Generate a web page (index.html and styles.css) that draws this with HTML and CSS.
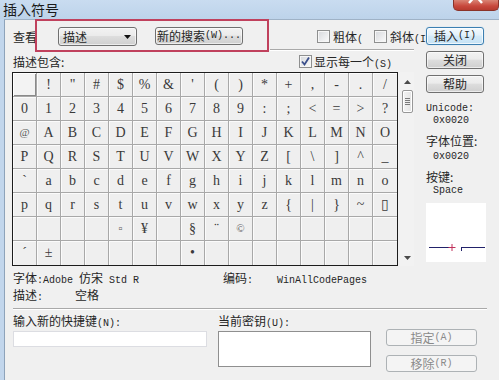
FILE: index.html
```html
<!DOCTYPE html>
<html>
<head>
<meta charset="utf-8">
<title>插入符号</title>
<link rel="stylesheet" href="styles.css">
</head>
<body>
<div class="titlebar">
  <span class="title">插入符号</span>
  <div class="close"><svg width="46" height="11" viewBox="0 0 46 11"><path d="M22 -3 L16 4 M23 -3 L29 4" stroke="#fff" stroke-width="2.4" fill="none"/></svg></div>
</div>
<div class="window">
  <div class="inner">
    <div class="upper">
      <div class="left">
        <div class="toprow">
          <span class="look">查看</span>
          <div class="select"><span>描述</span><svg class="arr" width="7" height="4" viewBox="0 0 7 4"><path d="M0 0H7L3.5 4Z" fill="#111"/></svg></div>
          <div class="btn search">新的搜索<span class="m">(W)...</span></div>
          <span class="cb cb1"></span><span class="cblbl1">粗体<span class="m">(</span></span>
          <span class="cb"></span><span class="cblbl2">斜体<span class="m">(I</span></span>
        </div>
        <div class="sep1"></div>
        <div class="labelrow">
          <span class="lr-label">描述包含:</span>
          <span class="cb"><svg width="11" height="11" viewBox="0 0 11 11"><path d="M2 5.5 L4.5 8.5 L9 1.5" stroke="#3a4f8c" stroke-width="1.8" fill="none"/></svg></span>
          <span class="cb-lbl">显示每一个<span class="m">(S)</span></span>
        </div>
        <div class="gridrow">
          <div class="grid">
            <span class="c sel"></span><span class="c">!</span><span class="c">"</span><span class="c">#</span><span class="c">$</span><span class="c">%</span><span class="c">&amp;</span><span class="c">'</span><span class="c">(</span><span class="c">)</span><span class="c">*</span><span class="c">+</span><span class="c">,</span><span class="c">-</span><span class="c">.</span><span class="c">/</span>
            <span class="c">0</span><span class="c">1</span><span class="c">2</span><span class="c">3</span><span class="c">4</span><span class="c">5</span><span class="c">6</span><span class="c">7</span><span class="c">8</span><span class="c">9</span><span class="c">:</span><span class="c">;</span><span class="c">&lt;</span><span class="c">=</span><span class="c">&gt;</span><span class="c">?</span>
            <span class="c small">@</span><span class="c">A</span><span class="c">B</span><span class="c">C</span><span class="c">D</span><span class="c">E</span><span class="c">F</span><span class="c">G</span><span class="c">H</span><span class="c">I</span><span class="c">J</span><span class="c">K</span><span class="c">L</span><span class="c">M</span><span class="c">N</span><span class="c">O</span>
            <span class="c">P</span><span class="c">Q</span><span class="c">R</span><span class="c">S</span><span class="c">T</span><span class="c">U</span><span class="c">V</span><span class="c">W</span><span class="c">X</span><span class="c">Y</span><span class="c">Z</span><span class="c">[</span><span class="c">\</span><span class="c">]</span><span class="c">^</span><span class="c">_</span>
            <span class="c">`</span><span class="c">a</span><span class="c">b</span><span class="c">c</span><span class="c">d</span><span class="c">e</span><span class="c">f</span><span class="c">g</span><span class="c">h</span><span class="c">i</span><span class="c">j</span><span class="c">k</span><span class="c">l</span><span class="c">m</span><span class="c">n</span><span class="c">o</span>
            <span class="c">p</span><span class="c">q</span><span class="c">r</span><span class="c">s</span><span class="c">t</span><span class="c">u</span><span class="c">v</span><span class="c">w</span><span class="c">x</span><span class="c">y</span><span class="c">z</span><span class="c">{</span><span class="c">|</span><span class="c">}</span><span class="c">~</span><span class="c">▯</span>
            <span class="c"></span><span class="c"></span><span class="c"></span><span class="c"></span><span class="c small">▫</span><span class="c">¥</span><span class="c"></span><span class="c">§</span><span class="c">¨</span><span class="c small">©</span><span class="c"></span><span class="c"></span><span class="c"></span><span class="c"></span><span class="c"></span><span class="c"></span>
            <span class="c">´</span><span class="c">±</span><span class="c"></span><span class="c"></span><span class="c"></span><span class="c"></span><span class="c"></span><span class="c">•</span><span class="c"></span><span class="c"></span><span class="c"></span><span class="c"></span><span class="c"></span><span class="c"></span><span class="c"></span><span class="c"></span>
          </div>
          <div class="scroll">
            <svg class="up" width="7" height="4" viewBox="0 0 7 4"><path d="M0 4H7L3.5 0Z" fill="#4a4a4a"/></svg>
            <div class="thumb"><i></i><i></i><i></i><i></i></div>
            <div class="track"></div>
            <svg class="down" width="7" height="4" viewBox="0 0 7 4"><path d="M0 0H7L3.5 4Z" fill="#4a4a4a"/></svg>
          </div>
        </div>
      </div>
      <div class="right">
        <div class="btn b-insert">插入<span class="m">(I)</span></div>
        <div class="btn b-close">关闭</div>
        <div class="btn b-help">帮助</div>
        <div class="mono k1">Unicode:</div>
        <div class="mono v1">0x0020</div>
        <div class="k2">字体位置:</div>
        <div class="mono v2">0x0020</div>
        <div class="k3">按键:</div>
        <div class="mono v3">Space</div>
        <div class="preview">
          <svg width="60" height="59" viewBox="0 0 60 59">
            <path d="M3 44.5H23" stroke="#22226a" stroke-width="1"/>
            <path d="M35 44.5H59" stroke="#22226a" stroke-width="1"/>
            <path d="M35.5 44.5V48" stroke="#22226a" stroke-width="1"/>
            <path d="M22.5 44.5H29.5M26 41V48" stroke="#c0305a" stroke-width="1"/>
          </svg>
        </div>
      </div>
    </div>
    <div class="details">
      <div class="d1"><span class="f">字体<span class="m">:Adobe </span>仿宋<span class="m"> Std R</span></span><span>编码<span class="m">:    WinAllCodePages</span></span></div>
      <div class="d2">描述<span class="m">:     </span><span class="sp">空格</span></div>
    </div>
    <div class="sep2"></div>
    <div class="keys">
      <div class="kcol1">
        <div class="klbl">输入新的快捷键<span class="m">(N):</span></div>
        <div class="input"></div>
      </div>
      <div class="kcol2">
        <div class="klbl">当前密钥<span class="m">(U):</span></div>
        <div class="textarea"></div>
      </div>
      <div class="kcol3">
        <div class="btn dis">指定<span class="m">(A)</span></div>
        <div class="btn dis second">移除<span class="m">(R)</span></div>
      </div>
    </div>
  </div>
</div>
<div class="highlight"></div>
</body>
</html>
```
FILE: styles.css
```css
* { box-sizing: border-box; }
html, body { margin: 0; padding: 0; }
body {
  width: 499px;
  height: 380px;
  overflow: hidden;
  background: #f0f0f0;
  font-family: "Noto Sans CJK SC", sans-serif;
  font-size: 12px;
  color: #262626;
  position: relative;
}
.m, .mono { font-family: "Liberation Mono", monospace; font-size: 10px; }

.titlebar {
  height: 19px;
  display: flex;
  align-items: flex-start;
  background: linear-gradient(#c9dcf0, #bdd3ea);
}
.title {
  padding-left: 3px;
  font-size: 14px;
  line-height: 18px;
  color: #1a1a1a;
  white-space: nowrap;
}
.close {
  margin-left: auto;
  width: 46px;
  height: 11px;
  border: 1px solid #8a3329;
  border-top: none;
  border-radius: 0 0 5px 5px;
  background: linear-gradient(#d98474, #c8483c 60%, #b63b2f);
  overflow: hidden;
}
.close svg { display: block; margin: -1px 0 0 -1px; }

.window {
  height: 361px;
  border-left: 4px solid #c2d6ec;
}
.inner {
  height: 100%;
  border-left: 1px solid #8ea3ba;
  border-top: 1px solid #9fb2c6;
  padding-left: 7px;
}

.upper { display: flex; }
.left { width: 402px; }
.right { width: 60px; margin-left: 12px; }

.toprow {
  height: 29px;
  padding-top: 7px;
  display: flex;
  align-items: flex-start;
}
.toprow > * { flex: none; }
.look { margin-left: 1px; line-height: 19px; }
.select {
  margin-left: 21px;
  width: 79px;
  height: 19px;
  border: 1px solid #707070;
  border-radius: 3px;
  background: linear-gradient(#f2f2f2, #ebebeb 45%, #dddddd 50%, #cfcfcf);
  box-shadow: inset 0 0 0 1px rgba(255,255,255,.6);
  display: flex;
  align-items: center;
  padding-left: 4px;
  line-height: 1;
}
.select .arr { margin-left: auto; margin-right: 5px; }

.btn {
  height: 18px;
  border: 1px solid #707070;
  border-radius: 3px;
  background: linear-gradient(#f2f2f2, #ebebeb 45%, #dddddd 50%, #cfcfcf);
  box-shadow: inset 0 0 0 1px rgba(255,255,255,.6);
  display: flex;
  align-items: center;
  justify-content: center;
  line-height: 1;
  white-space: nowrap;
}
.search { margin-left: 18px; width: 88px; }

.cb {
  width: 13px;
  height: 13px;
  border: 1px solid #8e8f8f;
  background: linear-gradient(135deg, #d6d8dc, #fbfbfb);
  box-shadow: inset 0 0 0 1px #f6f6f6;
  flex: none;
  display: flex;
  align-items: center;
  justify-content: center;
}
.toprow .cb { margin-top: 3px; }
.cb1 { margin-left: 74px; }
.cblbl1 { margin-left: 3px; width: 41px; overflow: hidden; white-space: nowrap; line-height: 19px; }
.cblbl2 { margin-left: 3px; white-space: nowrap; line-height: 19px; }

.sep1 {
  margin-left: 258px;
  width: 144px;
  height: 2px;
  border-top: 1px solid #a9a9a9;
  border-bottom: 1px solid #fff;
}
.labelrow {
  height: 21px;
  display: flex;
  align-items: center;
}
.lr-label { width: 286px; margin-left: 1px; flex: none; }
.cb-lbl { margin-left: 2px; }

.gridrow { display: flex; height: 194px; }
.grid {
  width: 386px;
  height: 194px;
  flex: none;
  border: 1px solid #1c1c1c;
  background: #efefef;
  display: grid;
  grid-template-columns: repeat(16, 24px);
  grid-template-rows: repeat(8, 24px);
}
.c {
  border-right: 1px solid #a8a8a8;
  border-bottom: 1px solid #a8a8a8;
  box-shadow: inset 1px 1px 0 #fbfbfb;
  font-family: "Liberation Serif", serif;
  font-size: 14px;
  line-height: 23px;
  text-align: center;
  color: #3a3a3a;
}
.c.small { font-size: 11px; color: #5a5a5a; }
.c:nth-child(16n) { border-right: none; }
.c:nth-last-child(-n+16) { border-bottom: none; }
.c.sel { background: #f3f3f3; box-shadow: inset 1px 1px 0 #fff, inset -1px -1px 0 #8a8a8a; }

.scroll {
  width: 14px;
  margin-left: 2px;
  display: flex;
  flex-direction: column;
  align-items: center;
  background: #f2f2f2;
}
.scroll .up { margin-top: 8px; }
.thumb {
  margin-top: 6px;
  width: 11px;
  height: 23px;
  border: 1px solid #979797;
  border-radius: 2px;
  background: linear-gradient(90deg, #f4f4f4, #e4e4e4);
  box-shadow: inset 0 0 0 1px #fff;
  display: flex;
  flex-direction: column;
  align-items: center;
  justify-content: center;
  gap: 1px;
}
.thumb i { display: block; width: 5px; height: 1px; background: #7a7a7a; }
.track { flex: 1; }
.scroll .down { margin-bottom: 6px; }

.right .btn { width: 58px; }
.b-insert {
  margin-top: 7px;
  border-color: #3c7fb1;
  background: linear-gradient(#f3f9fd, #e3f1fa 45%, #d4eaf8 50%, #c5e2f5);
  box-shadow: inset 0 0 0 1px rgba(255,255,255,.7), 0 0 1px #8cc8ee;
}
.b-close, .b-help { margin-top: 6px; }
.k1 { margin-top: 10px; line-height: 12px; }
.v1 { line-height: 12px; padding-left: 7px; }
.k2 { margin-top: 7px; line-height: 14px; }
.v2 { margin-top: 3px; line-height: 12px; padding-left: 7px; }
.k3 { margin-top: 7px; line-height: 14px; }
.v3 { margin-top: 1px; line-height: 12px; padding-left: 7px; }
.preview {
  margin-top: 6px;
  width: 60px;
  height: 59px;
  background: #fff;
}
.preview svg { display: block; }

.details { margin-top: 5px; padding-left: 1px; }
.d1 { display: flex; line-height: 13px; white-space: pre; }
.d1 .f { width: 210px; }
.d2 { margin-top: 1px; line-height: 13px; white-space: pre; }
.d2 .sp { margin-left: 2px; }

.sep2 {
  margin-top: 4px;
  margin-left: 1px;
  width: 474px;
  height: 2px;
  border-top: 1px solid #a9a9a9;
  border-bottom: 1px solid #fff;
}
.keys { margin-top: 4px; display: flex; }
.kcol1 { width: 194px; margin-left: 1px; }
.kcol2 { width: 153px; margin-left: 11px; }
.kcol3 { width: 91px; margin-left: 15px; padding-top: 15px; }
.klbl { line-height: 13px; white-space: nowrap; }
.input {
  margin-top: 1px;
  height: 16px;
  background: #fff;
  border: 1px solid #dcdde2;
}
.textarea {
  margin-top: 1px;
  height: 36px;
  background: #fff;
  border: 1px solid #8f8f8f;
}
.btn.dis {
  height: 17px;
  border-color: #adb2b5;
  background: #f4f4f4;
  box-shadow: none;
  color: #8a8a8a;
}
.btn.second { margin-top: 9px; }

.highlight {
  position: absolute;
  left: 35px;
  top: 19px;
  width: 234px;
  height: 33px;
  border: 2px solid #c0415d;
  pointer-events: none;
}
```
